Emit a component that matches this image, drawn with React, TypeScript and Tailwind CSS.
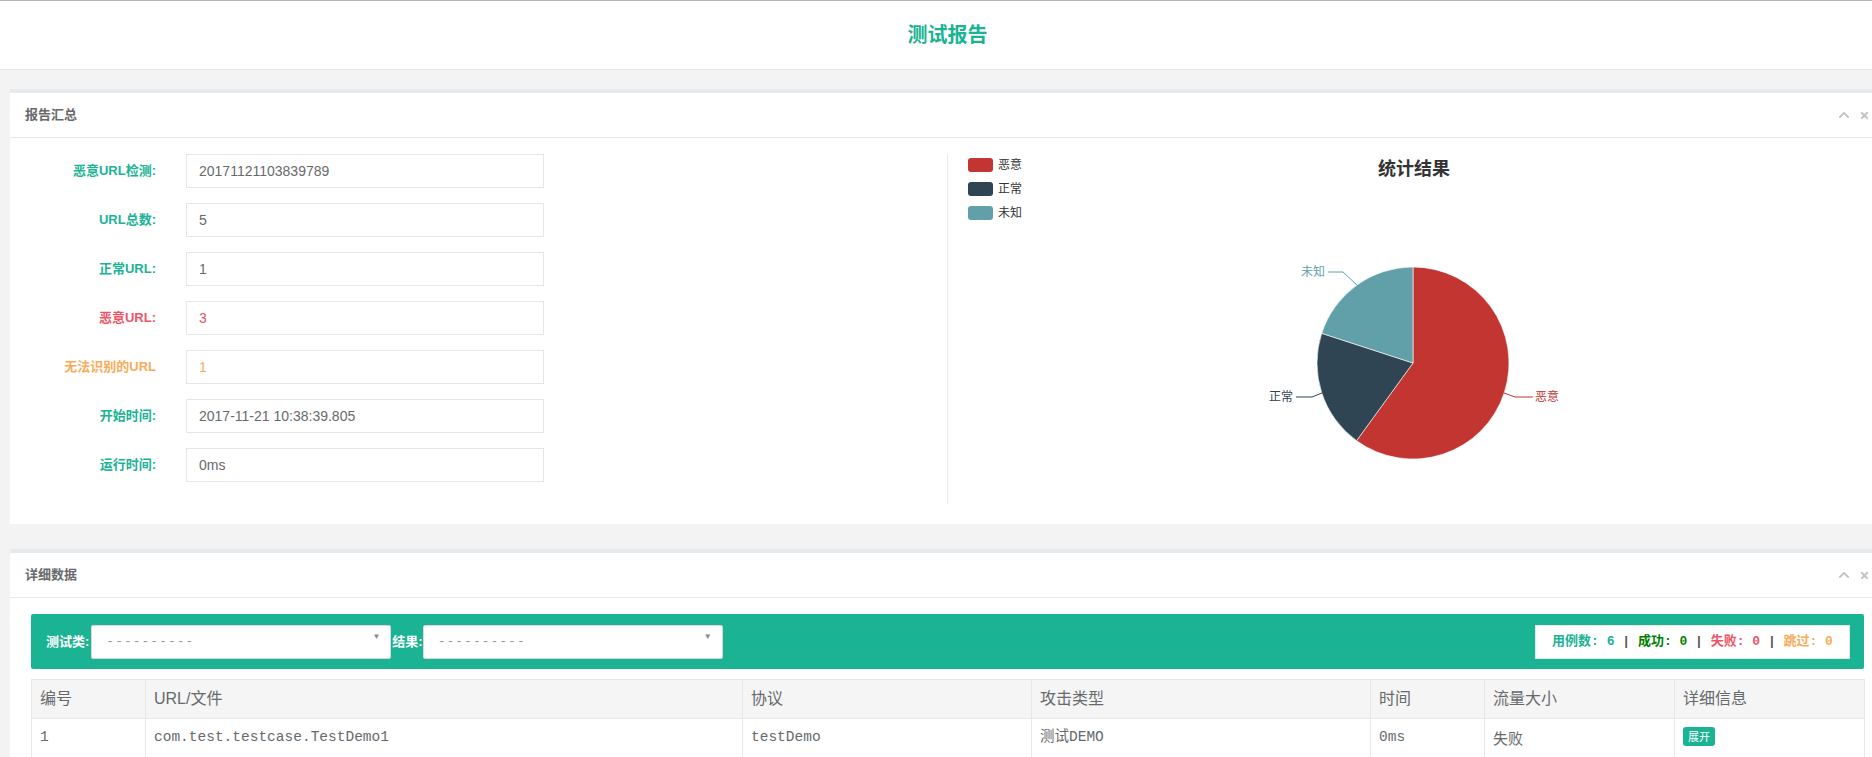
import { FaChevronUp, FaTimes } from "react-icons/fa";

const summary = [
  { label: "恶意URL检测:", value: "20171121103839789", tone: "green" },
  { label: "URL总数:", value: "5", tone: "green" },
  { label: "正常URL:", value: "1", tone: "green" },
  { label: "恶意URL:", value: "3", tone: "red" },
  { label: "无法识别的URL", value: "1", tone: "orange" },
  { label: "开始时间:", value: "2017-11-21 10:38:39.805", tone: "green" },
  { label: "运行时间:", value: "0ms", tone: "green" },
];

const labelTone: Record<string, string> = {
  green: "text-[#1ab394]",
  red: "text-[#ed5565]",
  orange: "text-[#f8ac59]",
};

const valueTone: Record<string, string> = {
  green: "text-[#676a6c]",
  red: "text-[#ed5565]",
  orange: "text-[#f8ac59]",
};

const columns = [
  { name: "编号", w: "w-[114px]" },
  { name: "URL/文件", w: "w-[597px]" },
  { name: "协议", w: "w-[289px]" },
  { name: "攻击类型", w: "w-[339px]" },
  { name: "时间", w: "w-[114px]" },
  { name: "流量大小", w: "w-[190px]" },
  { name: "详细信息", w: "w-[190px]" },
];

const Panel = ({ title, children }: { title: string; children: React.ReactNode }) => {
  return (
    <div className="ml-[10px] w-[1875px] bg-white border-t-4 border-[#e7eaec]">
      <div className="h-[45px] flex items-center justify-between pl-[15px] pr-[15px] border-b border-[#e7eaec]">
        <h5 className="text-[13px] font-semibold text-[#676a6c]">{title}</h5>
        <div className="flex items-center gap-[9px] text-[#c4c4c4]">
          <FaChevronUp size={12} />
          <FaTimes size={11} />
        </div>
      </div>
      {children}
    </div>
  );
};

const legend = [
  { name: "恶意", color: "#c23531", y: 4 },
  { name: "正常", color: "#2f4554", y: 28 },
  { name: "未知", color: "#61a0a8", y: 52 },
];

// pie chart (echarts look), origin at the right column's top-left
const PieChart = () => {
  return (
    <svg width="932" height="350" className="block">
      {legend.map((l) => (
        <g key={l.name}>
          <rect x="20" y={l.y} width="25" height="14" rx="3" fill={l.color} />
          <text x="50" y={l.y + 11} fontSize="12" fill="#333" fontFamily="'Noto Sans CJK SC', sans-serif">
            {l.name}
          </text>
        </g>
      ))}

      {/* slices */}
      <path d="M465,209 L465,113 A96,96 0 1 1 408.57,286.67 Z" fill="#c23531" stroke="#fff" strokeWidth="0.6" />
      <path d="M465,209 L408.57,286.67 A96,96 0 0 1 373.7,179.33 Z" fill="#2f4554" stroke="#fff" strokeWidth="0.6" />
      <path d="M465,209 L373.7,179.33 A96,96 0 0 1 465,113 Z" fill="#61a0a8" stroke="#fff" strokeWidth="0.6" />

      {/* label lines */}
      <polyline points="556,239 567,243 585,243" fill="none" stroke="#c23531" strokeWidth="1" />
      <polyline points="374,239 364,243 348,243" fill="none" stroke="#2f4554" strokeWidth="1" />
      <polyline points="409,131 395,118 380,118" fill="none" stroke="#61a0a8" strokeWidth="1" />

      <text x="587" y="247" fontSize="12" fill="#c23531" fontFamily="'Noto Sans CJK SC', sans-serif">
        恶意
      </text>
      <text x="345" y="247" fontSize="12" textAnchor="end" fill="#2f4554" fontFamily="'Noto Sans CJK SC', sans-serif">
        正常
      </text>
      <text x="377" y="122" fontSize="12" textAnchor="end" fill="#61a0a8" fontFamily="'Noto Sans CJK SC', sans-serif">
        未知
      </text>
    </svg>
  );
};

const SelectBox = () => (
  <div className="w-[300px] h-[34px] bg-white border border-[#d9d9d9] rounded-[2px] flex items-center justify-between pl-[14px] pr-[10px]">
    <span className="text-[13px] text-[#999] tracking-[1px] font-['Liberation_Mono',monospace]">----------</span>
    <span className="text-[8px] text-[#888] -mt-[10px]">▼</span>
  </div>
);

const App = () => {
  return (
    <div className="w-[1872px] h-[757px] overflow-hidden bg-[#f3f3f4] font-['Liberation_Sans','Noto_Sans_CJK_SC',sans-serif]">
      <div className="w-[1895px]">
        {/* page header */}
        <div className="h-[70px] bg-white border-t border-[#b5b5b5] border-b border-b-[#e7e7e7] flex items-center justify-center">
          <h1 className="text-[20px] font-bold text-[#1ab394]">测试报告</h1>
        </div>

        <div className="mt-[19px]">
          <Panel title="报告汇总">
            <div className="flex pt-[16px] pb-[20px] pl-[15px]">
              {/* form */}
              <div className="w-[922px] flex flex-col gap-[15px]">
                {summary.map((row) => (
                  <div key={row.label} className="flex items-center">
                    <label className={`w-[131px] text-right text-[13px] font-bold ${labelTone[row.tone]}`}>
                      {row.label}
                    </label>
                    <div
                      className={`ml-[30px] w-[358px] h-[34px] border border-[#e5e6e7] flex items-center px-[12px] text-[14px] ${valueTone[row.tone]}`}
                    >
                      {row.value}
                    </div>
                  </div>
                ))}
              </div>

              {/* chart */}
              <div className="relative w-[933px] h-[350px] border-l border-[#e7eaec]">
                <div className="absolute top-[1px] left-0 right-0 text-center text-[18px] leading-[24px] font-bold text-[#333] font-['Noto_Sans_CJK_SC',sans-serif]">
                  统计结果
                </div>
                <PieChart />
              </div>
            </div>
          </Panel>
        </div>

        <div className="mt-[25px]">
          <Panel title="详细数据">
            <div className="pt-[16px] px-[21px]">
              {/* toolbar */}
              <div className="h-[55px] bg-[#1ab394] rounded-[2px] flex items-center justify-between pl-[15px] pr-[14px]">
                <div className="flex items-center">
                  <span className="text-[13px] font-bold text-white pr-[2px]">测试类:</span>
                  <SelectBox />
                  <span className="text-[13px] font-bold text-white ml-[1px]">结果:</span>
                  <SelectBox />
                </div>
                <div className="w-[315px] h-[34px] bg-white border border-[#e5e6e7] flex items-center justify-center text-[13px] font-bold font-['Liberation_Mono','Noto_Sans_CJK_SC',monospace] whitespace-pre">
                  <span className="text-[#1ab394]">用例数: 6</span>
                  <span className="text-[#555]"> | </span>
                  <span className="text-[#008000]">成功: 0</span>
                  <span className="text-[#555]"> | </span>
                  <span className="text-[#ed5565]">失败: 0</span>
                  <span className="text-[#555]"> | </span>
                  <span className="text-[#f8ac59]">跳过: 0</span>
                </div>
              </div>

              {/* table */}
              <table className="mt-[10px] w-[1833px] table-fixed border-collapse">
                <thead>
                  <tr className="bg-[#f5f5f6]">
                    {columns.map((c) => (
                      <th
                        key={c.name}
                        className={`${c.w} h-[39px] border border-[#e7e7e7] px-[8px] text-left text-[16px] font-normal text-[#676a6c]`}
                      >
                        {c.name}
                      </th>
                    ))}
                  </tr>
                </thead>
                <tbody className="text-[14.5px] text-[#676a6c] font-['Liberation_Mono','Noto_Sans_CJK_SC',monospace]">
                  <tr>
                    <td className="h-[39px] border border-[#e7e7e7] px-[8px]">1</td>
                    <td className="border border-[#e7e7e7] px-[8px]">com.test.testcase.TestDemo1</td>
                    <td className="border border-[#e7e7e7] px-[8px]">testDemo</td>
                    <td className="border border-[#e7e7e7] px-[8px]">测试DEMO</td>
                    <td className="border border-[#e7e7e7] px-[8px]">0ms</td>
                    <td className="border border-[#e7e7e7] px-[8px] font-['Noto_Sans_CJK_SC',sans-serif] text-[15px]">失败</td>
                    <td className="border border-[#e7e7e7] px-[8px]">
                      <button className="h-[19px] px-[5px] rounded-[3px] bg-[#1ab394] text-white text-[11px] font-['Noto_Sans_CJK_SC',sans-serif] leading-none">
                        展开
                      </button>
                    </td>
                  </tr>
                </tbody>
              </table>
            </div>
          </Panel>
        </div>
      </div>
    </div>
  );
};

export default App;
